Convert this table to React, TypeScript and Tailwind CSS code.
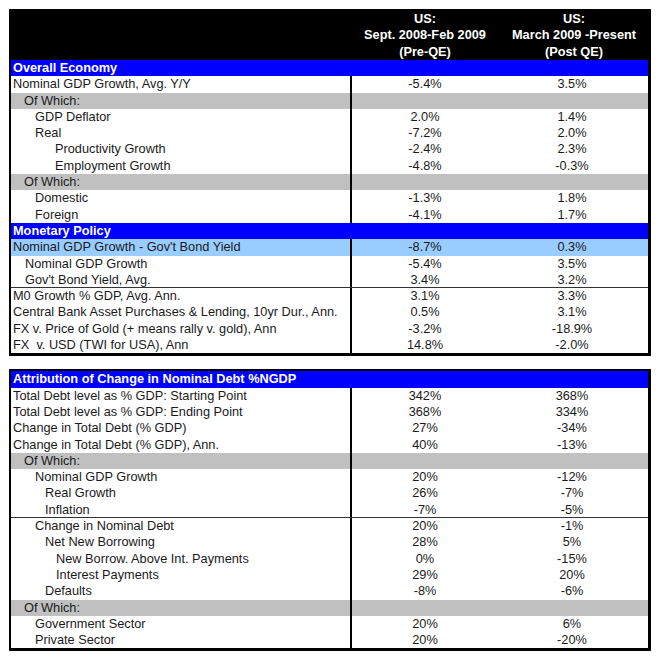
import React from "react";

type Kind = "normal" | "gray" | "light" | "blue";
type Row = { label: string; x?: number; a?: string; b?: string; kind?: Kind; line?: boolean };

const t1: Row[] = [
  { label: "Overall Economy", kind: "blue" },
  { label: "Nominal GDP Growth, Avg. Y/Y", x: 0, a: "-5.4%", b: "3.5%" },
  { label: "Of Which:", x: 11, kind: "gray" },
  { label: "GDP Deflator", x: 22, a: "2.0%", b: "1.4%" },
  { label: "Real", x: 22, a: "-7.2%", b: "2.0%" },
  { label: "Productivity Growth", x: 42, a: "-2.4%", b: "2.3%" },
  { label: "Employment Growth", x: 42, a: "-4.8%", b: "-0.3%" },
  { label: "Of Which:", x: 11, kind: "gray" },
  { label: "Domestic", x: 22, a: "-1.3%", b: "1.8%" },
  { label: "Foreign", x: 22, a: "-4.1%", b: "1.7%" },
  { label: "Monetary Policy", kind: "blue" },
  { label: "Nominal GDP Growth - Gov't Bond Yield", x: 0, a: "-8.7%", b: "0.3%", kind: "light" },
  { label: "Nominal GDP Growth", x: 12, a: "-5.4%", b: "3.5%" },
  { label: "Gov't Bond Yield, Avg.", x: 12, a: "3.4%", b: "3.2%", line: true },
  { label: "M0 Growth % GDP, Avg. Ann.", x: 0, a: "3.1%", b: "3.3%" },
  { label: "Central Bank Asset Purchases & Lending, 10yr Dur., Ann.", x: 0, a: "0.5%", b: "3.1%" },
  { label: "FX v. Price of Gold (+ means rally v. gold), Ann", x: 0, a: "-3.2%", b: "-18.9%" },
  { label: "FX  v. USD (TWI for USA), Ann", x: 0, a: "14.8%", b: "-2.0%" },
];

const t2: Row[] = [
  { label: "Attribution of Change in Nominal Debt %NGDP", kind: "blue" },
  { label: "Total Debt level as % GDP: Starting Point", x: 0, a: "342%", b: "368%" },
  { label: "Total Debt level as % GDP: Ending Point", x: 0, a: "368%", b: "334%" },
  { label: "Change in Total Debt (% GDP)", x: 0, a: "27%", b: "-34%" },
  { label: "Change in Total Debt (% GDP), Ann.", x: 0, a: "40%", b: "-13%" },
  { label: "Of Which:", x: 11, kind: "gray" },
  { label: "Nominal GDP Growth", x: 22, a: "20%", b: "-12%" },
  { label: "Real Growth", x: 32, a: "26%", b: "-7%" },
  { label: "Inflation", x: 32, a: "-7%", b: "-5%", line: true },
  { label: "Change in Nominal Debt", x: 22, a: "20%", b: "-1%" },
  { label: "Net New Borrowing", x: 32, a: "28%", b: "5%" },
  { label: "New Borrow. Above Int. Payments", x: 43, a: "0%", b: "-15%" },
  { label: "Interest Payments", x: 43, a: "29%", b: "20%" },
  { label: "Defaults", x: 32, a: "-8%", b: "-6%" },
  { label: "Of Which:", x: 11, kind: "gray" },
  { label: "Government Sector", x: 22, a: "20%", b: "6%" },
  { label: "Private Sector", x: 22, a: "20%", b: "-20%" },
];

function DataRow({ r }: { r: Row }) {
  if (r.kind === "blue") {
    return (
      <div className="h-[16.3px] bg-[#0000ff] text-white font-bold leading-[16.3px] pl-[2px] whitespace-pre">
        {r.label}
      </div>
    );
  }
  const bg = r.kind === "gray" ? "bg-[#c0c0c0]" : r.kind === "light" ? "bg-[#99ccff]" : "bg-white";
  return (
    <div
      className={`flex h-[16.3px] leading-[16.3px] text-[#1a1a1a] ${bg} ${
        r.line ? "border-b border-[#333]" : ""
      }`}
    >
      <div className="w-[339px] whitespace-pre" style={{ paddingLeft: 2 + (r.x ?? 0) }}>
        {r.label}
      </div>
      <div className="w-[148px] border-l-2 border-black text-center">{r.a ?? ""}</div>
      <div className="w-[148px] text-center">{r.b ?? ""}</div>
    </div>
  );
}

export default function App() {
  return (
    <div
      className="w-[666px] h-[658px] bg-white pt-[9px] pl-[9px] text-[12.75px]"
      style={{ fontFamily: '"Liberation Sans", Arial, sans-serif' }}
    >
      <div className="w-[642px] border-l-2 border-t-2 border-r-[3px] border-b-[3px] border-black">
        <div className="flex h-[49px] bg-black text-white font-bold leading-[16.3px]">
          <div className="w-[339px]" />
          <div className="w-[150px] flex flex-col items-center justify-end">
            <div>US:</div>
            <div>Sept. 2008-Feb 2009</div>
            <div>(Pre-QE)</div>
          </div>
          <div className="w-[148px] flex flex-col items-center justify-end">
            <div>US:</div>
            <div>March 2009 -Present</div>
            <div>(Post QE)</div>
          </div>
        </div>
        {t1.map((r, i) => (
          <DataRow key={i} r={r} />
        ))}
      </div>
      <div className="mt-[13px] w-[642px] border-l-2 border-t-2 border-r-[3px] border-b-[3px] border-black">
        {t2.map((r, i) => (
          <DataRow key={i} r={r} />
        ))}
      </div>
    </div>
  );
}
